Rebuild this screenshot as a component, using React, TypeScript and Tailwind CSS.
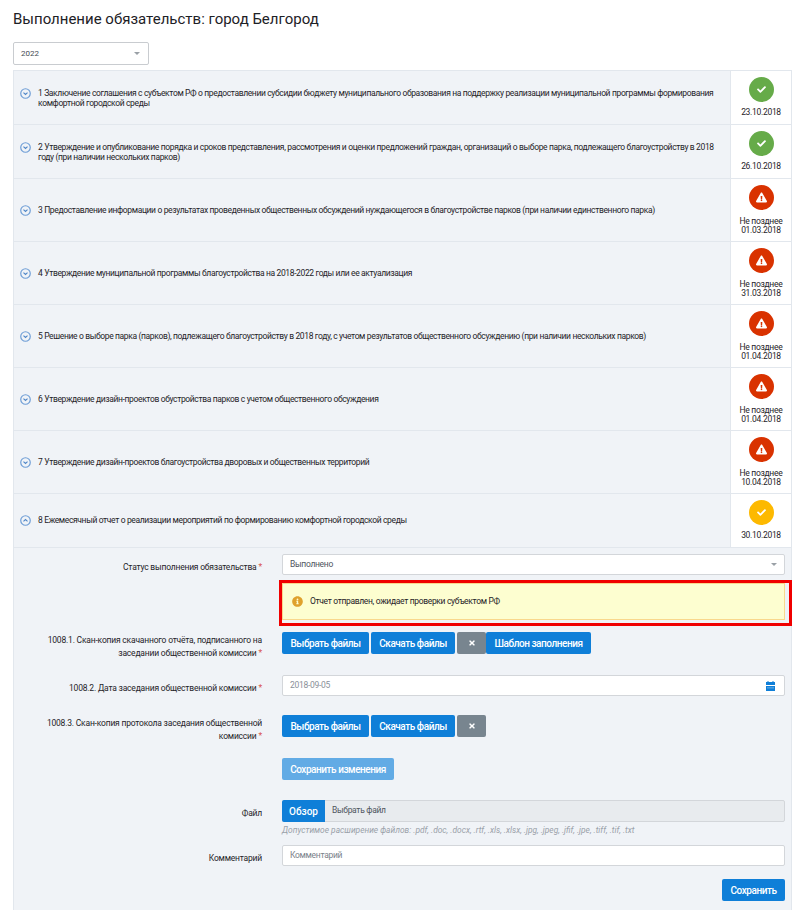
import { FaCheck, FaExclamationTriangle, FaInfoCircle, FaTimes } from 'react-icons/fa'

type Row = { text: string; status: 'done' | 'late' | 'sent'; date: string; h: string; open?: boolean }

const rows: Row[] = [
  { text: '1 Заключение соглашения с субъектом РФ о предоставлении субсидии бюджету муниципального образования на поддержку реализации муниципальной программы формирования комфортной городской среды', status: 'done', date: '23.10.2018', h: 'h-[54px]' },
  { text: '2 Утверждение и опубликование порядка и сроков представления, рассмотрения и оценки предложений граждан, организаций о выборе парка, подлежащего благоустройству в 2018 году (при наличии нескольких парков)', status: 'done', date: '26.10.2018', h: 'h-[54px]' },
  { text: '3 Предоставление информации о результатах проведенных общественных обсуждений нуждающегося в благоустройстве парков (при наличии единственного парка)', status: 'late', date: '01.03.2018', h: 'h-[63px]' },
  { text: '4 Утверждение муниципальной программы благоустройства на 2018-2022 годы или ее актуализация', status: 'late', date: '31.03.2018', h: 'h-[63px]' },
  { text: '5 Решение о выборе парка (парков), подлежащего благоустройству в 2018 году, с учетом результатов общественного обсуждению (при наличии нескольких парков)', status: 'late', date: '01.04.2018', h: 'h-[63px]' },
  { text: '6 Утверждение дизайн-проектов обустройства парков с учетом общественного обсуждения', status: 'late', date: '01.04.2018', h: 'h-[63px]' },
  { text: '7 Утверждение дизайн-проектов благоустройства дворовых и общественных территорий', status: 'late', date: '10.04.2018', h: 'h-[63px]' },
  { text: '8 Ежемесячный отчет о реализации мероприятий по формированию комфортной городской среды', status: 'sent', date: '30.10.2018', h: 'h-[54px]', open: true },
]

function Toggle({ open }: { open?: boolean }) {
  return (
    <svg viewBox="0 0 12 12" className="w-[11px] h-[11px] shrink-0" fill="none" stroke="#6f9ed6" strokeWidth="1.3">
      <circle cx="6" cy="6" r="5.2" />
      <path d={open ? 'M3.8 7 6 5l2.2 2' : 'M3.8 5 6 7l2.2-2'} stroke="#4f86c8" strokeWidth="1.2" />
    </svg>
  )
}

function CalendarIcon() {
  return (
    <svg viewBox="0 0 9 10" className="w-[9px] h-[10px] mr-[2px]" fill="#0f7fd8">
      <rect x="1.5" y="0" width="1" height="2" />
      <rect x="6.5" y="0" width="1" height="2" />
      <rect x="0" y="1" width="9" height="3" />
      <rect x="0" y="5" width="9" height="5" />
      <rect x="1" y="6.5" width="7" height="0.8" fill="#7db9ea" />
    </svg>
  )
}

function StatusIcon({ status }: { status: Row['status'] }) {
  if (status === 'late') {
    return (
      <div className="w-[25px] h-[25px] rounded-full bg-[#d93200] flex items-center justify-center">
        <FaExclamationTriangle className="text-white text-[11px]" />
      </div>
    )
  }
  return (
    <div className={`w-[25px] h-[25px] rounded-full flex items-center justify-center ${status === 'done' ? 'bg-[#66ab49]' : 'bg-[#fdb900]'}`}>
      <FaCheck className="text-white text-[9px]" />
    </div>
  )
}

function TableRow({ row }: { row: Row }) {
  const late = row.status === 'late'
  return (
    <div className={`flex border-b border-[#e2e7ed] ${row.h}`}>
      <div className="flex-1 flex items-center pl-[6px] pr-[8px] min-w-0">
        <div className="flex items-start gap-[7px]">
          <Toggle open={row.open} />
          <p className="text-[8.5px] tracking-[-0.36px] leading-[10px] text-[#1f2328]">{row.text}</p>
        </div>
      </div>
      <div className="w-[61px] shrink-0 bg-white border-l border-[#e2e7ed] flex flex-col items-center pt-[6px] text-[8.5px] tracking-[-0.3px] leading-[9px] text-[#1f2328]">
        <StatusIcon status={row.status} />
        {late ? <span className="mt-[7px]">Не позднее</span> : null}
        <span className={late ? 'mt-0' : 'mt-[6px]'}>{row.date}</span>
      </div>
    </div>
  )
}

function Label({ children, required, className }: { children: React.ReactNode; required?: boolean; className?: string }) {
  return (
    <div className={`w-[248px] shrink-0 text-right text-[8.5px] tracking-[-0.2px] leading-[13px] text-[#1f2328] ${className ?? ''}`}>
      {children}
      {required ? <span className="text-[#d9534f] ml-[2px]">*</span> : null}
    </div>
  )
}

function Btn({ children, className }: { children: React.ReactNode; className?: string }) {
  return (
    <button className={`h-[22px] rounded-[2px] text-white text-[10px] tracking-[-0.45px] font-medium flex items-center justify-center ${className ?? 'bg-[#0f7fd8]'}`}>
      {children}
    </button>
  )
}

function Remove() {
  return (
    <button className="h-[22px] w-[29px] rounded-[2px] bg-[#78858f] text-white flex items-center justify-center">
      <FaTimes className="text-[8px]" />
    </button>
  )
}

const inputBox = 'h-[21px] bg-white border border-[#d3d6da] rounded-[2px] flex items-center px-[7px] text-[8.5px] tracking-[-0.3px]'

export default function App() {
  return (
    <div className="h-[910px] overflow-hidden bg-white font-['Roboto',sans-serif] pl-[13px] pr-[7px]">
      <h1 className="pt-[10px] h-[42px] text-[15px] leading-[18px] text-[#1d2126]">Выполнение обязательств: город Белгород</h1>
      <div className="w-[136px] h-[23px] border border-[#c9ccd0] rounded-[2px] flex items-center justify-between pl-[7px] pr-[8px] text-[8px] text-[#444b53]">
        2022
        <span className="w-0 h-0 border-x-[3px] border-x-transparent border-t-[3px] border-t-[#9aa0a6]" />
      </div>
      <div className="mt-[5px] bg-[#f0f3f7] border border-[#e2e7ed] border-b-0">
        {rows.map((row) => (
          <TableRow key={row.text} row={row} />
        ))}
        <div className="pr-[6px] pt-[6px] pb-[30px]">
          <div className="flex items-start gap-[20px]">
            <Label required className="pt-[7px]">Статус выполнения обязательства</Label>
            <div className={`${inputBox} flex-1 justify-between text-[#4f565e]`}>
              Выполнено
              <span className="w-0 h-0 border-x-[3px] border-x-transparent border-t-[3px] border-t-[#9aa0a6]" />
            </div>
          </div>
          <div className="ml-[268px] mt-[8px] relative">
            <div className="h-[37px] bg-[#fdfed0] border border-[#f9d88c] flex items-center pl-[9px] gap-[7px] text-[8.5px] tracking-[-0.33px] text-[#1f2328]">
              <FaInfoCircle className="text-[#dfa12c] text-[11px]" />
              Отчет отправлен, ожидает проверки субъектом РФ
            </div>
            <div className="absolute -left-[3px] -top-[3px] -right-[7px] -bottom-[6px] border-[3px] border-[#f00000]" />
          </div>
          <div className="flex items-start gap-[20px] mt-[12px]">
            <Label required className="pt-[2px]">1008.1. Скан-копия скачанного отчёта, подписанного на заседании общественной комиссии</Label>
            <div className="flex">
              <Btn className="w-[87px] bg-[#0f7fd8]">Выбрать файлы</Btn>
              <Btn className="w-[84px] ml-[2px] bg-[#0f7fd8]">Скачать файлы</Btn>
              <div className="ml-[2px]"><Remove /></div>
              <Btn className="w-[105px] bg-[#0f7fd8]">Шаблон заполнения</Btn>
            </div>
          </div>
          <div className="flex items-start gap-[20px] mt-[15px]">
            <Label required className="pt-[7px]">1008.2. Дата заседания общественной комиссии</Label>
            <div className={`${inputBox} flex-1 justify-between text-[#8a9099]`}>
              2018-09-05
              <CalendarIcon />
            </div>
          </div>
          <div className="flex items-start gap-[20px] mt-[19px]">
            <Label required className="pt-[2px]">1008.3. Скан-копия протокола заседания общественной комиссии</Label>
            <div className="flex">
              <Btn className="w-[87px] bg-[#0f7fd8]">Выбрать файлы</Btn>
              <Btn className="w-[84px] ml-[2px] bg-[#0f7fd8]">Скачать файлы</Btn>
              <div className="ml-[2px]"><Remove /></div>
            </div>
          </div>
          <div className="ml-[268px] mt-[15px]">
            <Btn className="w-[112px] bg-[#62abe5]">Сохранить изменения</Btn>
          </div>
          <div className="flex items-start gap-[20px] mt-[20px]">
            <Label className="pt-[7px]">Файл</Label>
            <div className="flex-1 h-[22px] flex rounded-[2px] bg-[#e8ebee] border border-[#d3d6da]">
              <div className="w-[43px] -m-px h-[22px] bg-[#0f7fd8] text-white text-[10px] font-medium flex items-center justify-center rounded-l-[2px]">Обзор</div>
              <span className="pl-[8px] text-[8.5px] tracking-[-0.3px] leading-[19px] text-[#4f565e]">Выбрать файл</span>
            </div>
          </div>
          <p className="ml-[268px] mt-[3px] text-[8.4px] leading-[11px] italic text-[#9aa1a9]">Допустимое расширение файлов: .pdf, .doc, .docx, .rtf, .xls, .xlsx, .jpg, .jpeg, .jfif, .jpe, .tiff, .tif, .txt</p>
          <div className="flex items-start gap-[20px] mt-[9px]">
            <Label className="pt-[7px]">Комментарий</Label>
            <div className={`${inputBox} flex-1 text-[#7a818a]`}>Комментарий</div>
          </div>
          <div className="flex justify-end mt-[13px]">
            <Btn className="w-[63px] bg-[#0f7fd8]">Сохранить</Btn>
          </div>
        </div>
      </div>
    </div>
  )
}
